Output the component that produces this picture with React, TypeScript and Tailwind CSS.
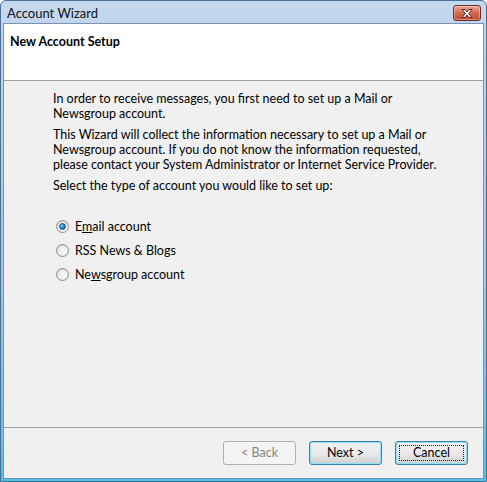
import React, { useState } from "react";

const FONT = { fontFamily: 'Lato, "Noto Sans", "Liberation Sans", sans-serif' };

function CloseButton() {
  return (
    <div className="absolute right-[5px] top-[4px] flex h-[16px] w-[28px] items-center justify-center rounded-[3px] border border-[#6d2a22] bg-gradient-to-b from-[#e9a99a] via-[#d4654e] to-[#c54a32] shadow-[inset_0_0_0_1px_rgba(255,255,255,0.35)]">
      <svg width="14" height="11" viewBox="0 0 14 11">
        <path
          d="M2 1.5 L5 1.5 L7 4 L9 1.5 L12 1.5 L8.6 5.5 L12 9.5 L9 9.5 L7 7 L5 9.5 L2 9.5 L5.4 5.5 Z"
          fill="#ffffff"
          stroke="#5a2a24"
          strokeWidth="1"
          strokeLinejoin="round"
        />
      </svg>
    </div>
  );
}

function Radio({ checked }: { checked: boolean }) {
  return (
    <span className="flex h-[13px] w-[13px] items-center justify-center rounded-full border border-[#8e8f8f] bg-gradient-to-br from-[#d0d0d0] to-[#f4f4f4]">
      <span className="flex h-[9px] w-[9px] items-center justify-center rounded-full bg-gradient-to-br from-[#e6e6e6] to-[#ffffff]">
        {checked && (
          <span className="h-[7px] w-[7px] rounded-full border border-[#1b4f7a] bg-[radial-gradient(circle_at_35%_35%,#7fd3f7,#1f7fc0_55%,#0d4c80)]" />
        )}
      </span>
    </span>
  );
}

function Option({
  checked,
  onPick,
  children,
}: {
  checked: boolean;
  onPick: () => void;
  children: React.ReactNode;
}) {
  return (
    <label onClick={onPick} className="flex h-[24px] cursor-default items-center gap-[6px]">
      <Radio checked={checked} />
      <span>{children}</span>
    </label>
  );
}

function WizButton({
  children,
  variant,
}: {
  children: React.ReactNode;
  variant?: "disabled" | "default" | "focus";
}) {
  if (variant === "disabled") {
    return (
      <button className="h-[24px] w-[73px] rounded-[3px] border border-[#adb2b5] bg-[#f4f4f4] text-[#838383]">
        {children}
      </button>
    );
  }
  return (
    <button className="relative h-[24px] w-[73px] rounded-[3px] border border-[#3c7fb1] bg-gradient-to-b from-[#f2f2f2] via-[#ebebeb] to-[#cfcfcf] text-black shadow-[inset_0_0_0_1px_#8fe0f8]">
      {variant === "focus" && (
        <span className="absolute inset-[3px] border border-dotted border-[#222]" />
      )}
      <span className="relative">{children}</span>
    </button>
  );
}

export default function App() {
  const [kind, setKind] = useState("email");

  return (
    <div
      style={FONT}
      className="flex h-[482px] w-[487px] flex-col overflow-hidden rounded-t-[6px] border border-[#4a6e96] bg-gradient-to-b from-[#c4d8ee] via-[#a9c6e6] to-[#49c4ea] text-[12.5px] text-black"
    >
      {/* title bar */}
      <div className="relative h-[22px] shrink-0">
        <span className="absolute left-[6px] top-[3px] text-[13px] text-[#111]">Account Wizard</span>
        <CloseButton />
      </div>

      <div className="mx-[2px] mb-[2px] flex flex-1 flex-col border border-[#7a93b3]">
        {/* header */}
        <div className="h-[57px] shrink-0 border-b border-[#a0a0a0] bg-white pl-[6px] pt-[9px]">
          <span className="font-bold">New Account Setup</span>
        </div>

        {/* body */}
        <div className="flex flex-1 flex-col bg-[#f0f0f0] pl-[49px] pt-[10px] leading-[15px]">
          <p className="mb-[6px] whitespace-nowrap">
            In order to receive messages, you first need to set up a Mail or
            <br />
            Newsgroup account.
          </p>
          <p className="mb-[6px] whitespace-nowrap">
            This Wizard will collect the information necessary to set up a Mail or
            <br />
            Newsgroup account. If you do not know the information requested,
            <br />
            please contact your System Administrator or Internet Service Provider.
          </p>
          <p className="whitespace-nowrap">Select the type of account you would like to set up:</p>

          <div className="mt-[21px] flex flex-col pl-[3px]">
            <Option checked={kind === "email"} onPick={() => setKind("email")}>
              E<u>m</u>ail account
            </Option>
            <Option checked={kind === "rss"} onPick={() => setKind("rss")}>
              RSS News &amp; Blogs
            </Option>
            <Option checked={kind === "news"} onPick={() => setKind("news")}>
              Ne<u>w</u>sgroup account
            </Option>
          </div>
        </div>

        {/* footer */}
        <div className="flex h-[51px] shrink-0 items-start justify-end gap-[13px] border-t border-[#a0a0a0] bg-[#f0f0f0] pr-[15px] pt-[13px]">
          <WizButton variant="disabled">&lt; Back</WizButton>
          <WizButton variant="default">Next &gt;</WizButton>
          <WizButton variant="focus">Cancel</WizButton>
        </div>
      </div>
    </div>
  );
}
